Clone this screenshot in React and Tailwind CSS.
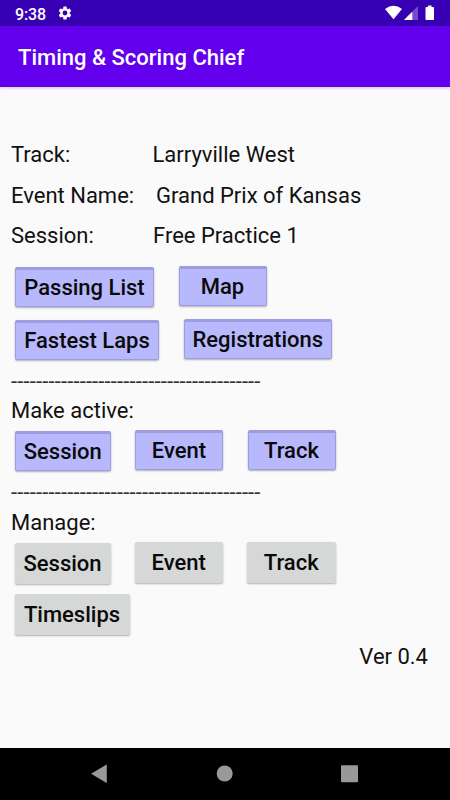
const DASHES = "-".repeat(40);

const info = [
  { label: "Track:", value: "Larryville West", labelWidth: "w-[141.5px]" },
  { label: "Event Name:", value: "Grand Prix of Kansas", labelWidth: "w-[145px]" },
  { label: "Session:", value: "Free Practice 1", labelWidth: "w-[142px]" },
];

function Button({ children, className, gray }) {
  const color = gray
    ? "h-[41px] bg-[#d6d7d7]"
    : "h-[40px] border border-t-[3px] border-[#9e9ce0] bg-[#b8b8fc]";

  return (
    <button
      className={`flex shrink-0 items-center justify-center rounded-[2px] text-[22px] leading-none font-medium whitespace-nowrap text-[#0a0a0a] shadow-[0_1px_2px_rgba(0,0,0,0.3)] ${color} ${className}`}
    >
      {children}
    </button>
  );
}

function Divider() {
  return (
    <div className="flex h-[40px] items-center pt-[3px] tracking-[0.16px] text-[#333333]">{DASHES}</div>
  );
}

function StatusBar() {
  return (
    <div className="flex h-[26px] items-center bg-[#3700b3] text-white">
      <span className="ml-[15px] w-[42px] pt-[3px] text-[16px] leading-none font-medium tracking-[-0.1px]">9:38</span>
      <svg className="h-[16px] w-[16px]" viewBox="0 0 24 24" fill="currentColor">
        <path d="M19.14 12.94c.04-.3.06-.61.06-.94 0-.32-.02-.64-.07-.94l2.03-1.58a.49.49 0 0 0 .12-.61l-1.92-3.32a.49.49 0 0 0-.59-.22l-2.39.96a7 7 0 0 0-1.62-.94l-.36-2.54a.48.48 0 0 0-.48-.41h-3.84a.48.48 0 0 0-.47.41l-.36 2.54c-.59.24-1.13.57-1.62.94l-2.39-.96a.48.48 0 0 0-.59.22L2.74 8.87a.48.48 0 0 0 .12.61l2.03 1.58a6 6 0 0 0-.02 1.88l-2.03 1.58a.49.49 0 0 0-.12.61l1.92 3.32c.12.22.37.29.59.22l2.39-.96c.5.38 1.03.7 1.62.94l.36 2.54c.05.24.24.41.48.41h3.84c.24 0 .44-.17.47-.41l.36-2.54a7 7 0 0 0 1.62-.94l2.39.96c.22.08.47 0 .59-.22l1.92-3.32a.49.49 0 0 0-.12-.61zM12 15.6a3.6 3.6 0 1 1 0-7.2 3.6 3.6 0 0 1 0 7.2z" />
      </svg>
      <svg className="ml-auto h-[26px] w-[65px]" viewBox="0 0 65 26" fill="currentColor">
        {/* wifi */}
        <path d="M0 8.9Q8.5 2.8 17 8.9L8.5 19.3z" />
        {/* signal */}
        <path d="M33 6v14H19z" fillOpacity="0.3" />
        <path d="M27.3 11.7V20H19z" />
        {/* battery */}
        <path d="M43 7V5.5h3.5V7H48a1 1 0 0 1 1 1v11a1 1 0 0 1-1 1h-6.500a1 1 0 0 1-1-1V8a1 1 0 0 1 1-1z" />
      </svg>
    </div>
  );
}

function NavBar() {
  return (
    <div className="h-[52px] bg-black text-[#999999]">
      <svg className="block h-[52px] w-[450px]" viewBox="0 0 450 52" fill="currentColor">
        <path d="M106.8 17v17.500q0 .6-.6.300L91.500 26q-.5-.3 0-.6l14.700-8.700q.6-.3.600.3z" />
        <circle cx="224.7" cy="25.5" r="8" />
        <rect x="341" y="17.2" width="17" height="17" rx="1" />
      </svg>
    </div>
  );
}

function App() {
  return (
    <div className="flex h-[800px] w-[450px] flex-col overflow-hidden bg-[#fafafa] font-['Roboto',sans-serif] text-[22px] leading-none text-[#111111]">
      <StatusBar />

      {/* Title bar */}
      <div className="flex h-[61px] items-center bg-[#6200ee] pl-[18px] text-white shadow-[0_1px_3px_rgba(0,0,0,0.2)]">
        <h1 className="pt-[3px] text-[22px] leading-none font-medium">Timing &amp; Scoring Chief</h1>
      </div>

      <div className="flex flex-1 flex-col pt-[47px] pl-[11px]">
        {/* Current event */}
        {info.map((row) => (
          <div key={row.label} className="flex h-[40.4px] items-center pt-[2px]">
            <span className={row.labelWidth}>{row.label}</span>
            <span>{row.value}</span>
          </div>
        ))}

        <div className="mt-[11px] flex h-[41px] gap-[24.5px] pl-[4px]">
          <Button className="mt-[1px] w-[139px]">Passing List</Button>
          <Button className="w-[88px]">Map</Button>
        </div>
        <div className="mt-[12px] flex h-[41px] gap-[24.5px] pl-[4px]">
          <Button className="mt-[1px] w-[144px]">Fastest Laps</Button>
          <Button className="w-[148.5px]">Registrations</Button>
        </div>

        {/* Make active */}
        <Divider />
        <div className="flex h-[22px] items-center">Make active:</div>
        <div className="mt-[8px] flex h-[41px] gap-[24.5px] pl-[4px]">
          <Button className="mt-[1px] w-[95.5px]">Session</Button>
          <Button className="w-[88px]">Event</Button>
          <Button className="w-[88px]">Track</Button>
        </div>

        {/* Manage */}
        <Divider />
        <div className="flex h-[23px] items-center">Manage:</div>
        <div className="mt-[8px] flex h-[42px] gap-[24px] pl-[3.5px]">
          <Button gray className="mt-[1px] w-[96px]">Session</Button>
          <Button gray className="w-[88.5px]">Event</Button>
          <Button gray className="w-[88.5px]">Track</Button>
        </div>
        <div className="mt-[10px] pl-[3.5px]">
          <Button gray className="w-[115px]">Timeslips</Button>
        </div>

        <div className="mt-[11px] mr-[22px] text-right">Ver 0.4</div>
      </div>

      <NavBar />
    </div>
  );
}

export default App;
